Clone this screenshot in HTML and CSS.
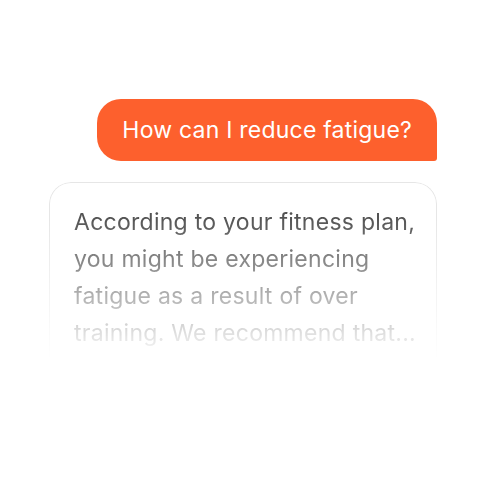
FILE: index.html
```html
<!DOCTYPE html>
<html lang="en">
<head>
<meta charset="utf-8">
<title>Chat</title>
<link rel="stylesheet" href="styles.css">
</head>
<body>
<main class="chat">
  <div class="bubble-user">How can I reduce fatigue?</div>
  <div class="card-reply">
    <p class="reply-text">According to your fitness plan, you might be experiencing fatigue as a result of over training. We recommend that...</p>
  </div>
</main>
</body>
</html>
```
FILE: styles.css
```css
html, body {
  margin: 0;
  padding: 0;
  background: #ffffff;
}
body {
  width: 480px;
  height: 480px;
  font-family: Inter, "Noto Sans", sans-serif;
}
.chat {
  display: flex;
  flex-direction: column;
  align-items: flex-end;
  gap: 21px;
  padding: 99px 43px 0 49px;
}
.bubble-user {
  background: #fd602d;
  color: #ffffff;
  font-size: 23px;
  letter-spacing: 0.22px;
  line-height: 62px;
  height: 62px;
  padding: 0 25px;
  border-radius: 24px 24px 3px 24px;
  white-space: nowrap;
}
.card-reply {
  align-self: stretch;
  box-sizing: border-box;
  height: 178px;
  border: 1.5px solid #e6e6e6;
  border-bottom: none;
  border-radius: 22px 22px 0 0;
  padding: 21px 10px 0 24px;
  -webkit-mask-image: linear-gradient(to bottom, #000 20%, transparent 100%);
  mask-image: linear-gradient(to bottom, #000 20%, transparent 100%);
}
.reply-text {
  margin: 0;
  color: #535353;
  font-size: 23px;
  letter-spacing: 0.27px;
  line-height: 37px;
}
```
